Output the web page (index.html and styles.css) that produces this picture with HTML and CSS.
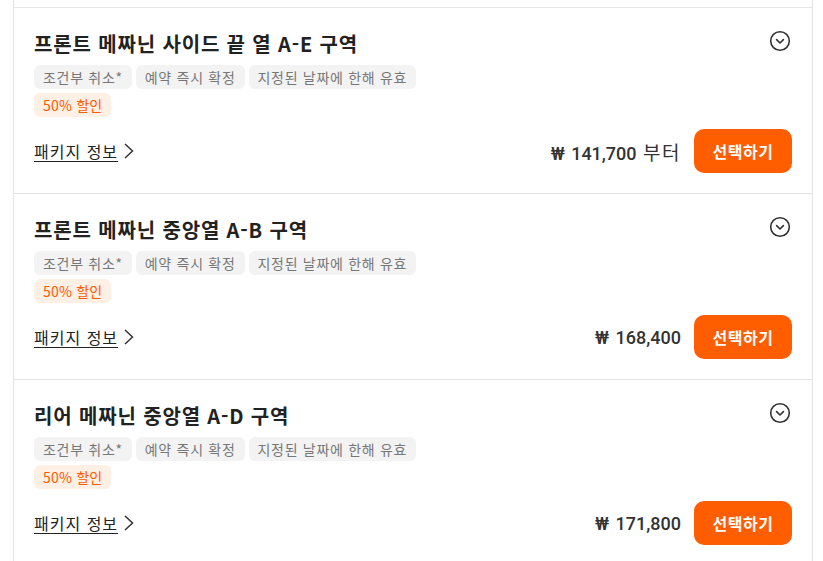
FILE: index.html
```html
<!DOCTYPE html>
<html lang="ko">
<head>
<meta charset="utf-8">
<link rel="stylesheet" href="styles.css">
</head>
<body>
<div class="list">
  <div class="card">
    <div class="head">
      <h3 class="title">프론트 메짜닌 사이드 끝 열 A-E 구역</h3>
      <svg class="toggle" viewBox="0 0 24 24" width="24" height="24"><circle cx="12" cy="12" r="9.3" fill="none" stroke="#333" stroke-width="1.6"/><path d="M8.6 10.6 L12 14 L15.4 10.6" fill="none" stroke="#333" stroke-width="1.6" stroke-linecap="round" stroke-linejoin="round"/></svg>
    </div>
    <div class="tags">
      <span class="tag">조건부 취소*</span><span class="tag">예약 즉시 확정</span><span class="tag">지정된 날짜에 한해 유효</span>
    </div>
    <div class="tags"><span class="tag sale">50% 할인</span></div>
    <div class="foot">
      <a class="pkg">패키지 정보</a><svg class="chev" viewBox="0 0 12 16" width="12" height="16"><path d="M2 1 L9.5 8 L2 15" fill="none" stroke="#333" stroke-width="1.5"/></svg>
      <div class="price"><span class="won">₩</span> 141,700 <span class="from">부터</span></div>
      <button class="btn">선택하기</button>
    </div>
  </div>
  <div class="card">
    <div class="head">
      <h3 class="title">프론트 메짜닌 중앙열 A-B 구역</h3>
      <svg class="toggle" viewBox="0 0 24 24" width="24" height="24"><circle cx="12" cy="12" r="9.3" fill="none" stroke="#333" stroke-width="1.6"/><path d="M8.6 10.6 L12 14 L15.4 10.6" fill="none" stroke="#333" stroke-width="1.6" stroke-linecap="round" stroke-linejoin="round"/></svg>
    </div>
    <div class="tags">
      <span class="tag">조건부 취소*</span><span class="tag">예약 즉시 확정</span><span class="tag">지정된 날짜에 한해 유효</span>
    </div>
    <div class="tags"><span class="tag sale">50% 할인</span></div>
    <div class="foot">
      <a class="pkg">패키지 정보</a><svg class="chev" viewBox="0 0 12 16" width="12" height="16"><path d="M2 1 L9.5 8 L2 15" fill="none" stroke="#333" stroke-width="1.5"/></svg>
      <div class="price"><span class="won">₩</span> 168,400</div>
      <button class="btn">선택하기</button>
    </div>
  </div>
  <div class="card">
    <div class="head">
      <h3 class="title">리어 메짜닌 중앙열 A-D 구역</h3>
      <svg class="toggle" viewBox="0 0 24 24" width="24" height="24"><circle cx="12" cy="12" r="9.3" fill="none" stroke="#333" stroke-width="1.6"/><path d="M8.6 10.6 L12 14 L15.4 10.6" fill="none" stroke="#333" stroke-width="1.6" stroke-linecap="round" stroke-linejoin="round"/></svg>
    </div>
    <div class="tags">
      <span class="tag">조건부 취소*</span><span class="tag">예약 즉시 확정</span><span class="tag">지정된 날짜에 한해 유효</span>
    </div>
    <div class="tags"><span class="tag sale">50% 할인</span></div>
    <div class="foot">
      <a class="pkg">패키지 정보</a><svg class="chev" viewBox="0 0 12 16" width="12" height="16"><path d="M2 1 L9.5 8 L2 15" fill="none" stroke="#333" stroke-width="1.5"/></svg>
      <div class="price"><span class="won">₩</span> 171,800</div>
      <button class="btn">선택하기</button>
    </div>
  </div>
</div>
</body>
</html>
```
FILE: styles.css
```css
* { box-sizing: border-box; }
html, body { margin: 0; background: #fff; }
body {
  font-family: "Noto Sans CJK KR", "Noto Sans", sans-serif;
  color: #222;
}
.list {
  margin-left: 13px;
  width: 800px;
  padding-top: 7px;
  border-left: 1px solid #e4e4e4;
  border-right: 1px solid #e4e4e4;
  min-height: 561px;
}
.card {
  border-top: 1px solid #e4e4e4;
  padding: 22px 20px 20px;
}
.head {
  display: flex;
  justify-content: space-between;
  align-items: flex-start;
}
.title {
  margin: 0;
  font-size: 20px;
  line-height: 28px;
  font-weight: 700;
  letter-spacing: 0.85px;
  color: #222;
}
.toggle { margin-top: -1px; }
.tags {
  display: flex;
  gap: 4px;
  margin-top: 4px;
}
.head + .tags { margin-top: 7px; }
.tag {
  display: inline-block;
  height: 24px;
  line-height: 24px;
  padding: 0 9px 0 9px;
  border-radius: 6px;
  background: #f3f3f3;
  color: #777;
  font-size: 14px;
  letter-spacing: 0.7px;
}
.tag.sale {
  background: #fff0e5;
  color: #ff5a00;
  letter-spacing: 0.2px;
}
.foot {
  display: flex;
  align-items: center;
  margin-top: 12px;
  height: 44px;
}
.pkg {
  font-size: 16px;
  letter-spacing: 1px;
  color: #222;
  text-decoration: underline;
  text-underline-offset: 3px;
}
.chev { margin-left: 5px; }
.price {
  margin-left: auto;
  margin-right: 13px;
  font-family: "Roboto", "Noto Sans CJK KR", sans-serif;
  font-size: 18px;
  font-weight: 500;
  color: #333;
}
.price .won { margin-right: 2px; }
.price .from {
  font-family: "Noto Sans CJK KR", sans-serif;
  font-weight: 400;
  font-size: 19px;
  letter-spacing: 1.5px;
  margin-left: 2px;
}
.btn {
  height: 44px;
  width: 98px;
  border: 0;
  border-radius: 10px;
  background: #ff5e00;
  color: #fff;
  font-family: "Noto Sans CJK KR", sans-serif;
  font-size: 16px;
  font-weight: 700;
  letter-spacing: 0.5px;
  padding: 0;
}
```
